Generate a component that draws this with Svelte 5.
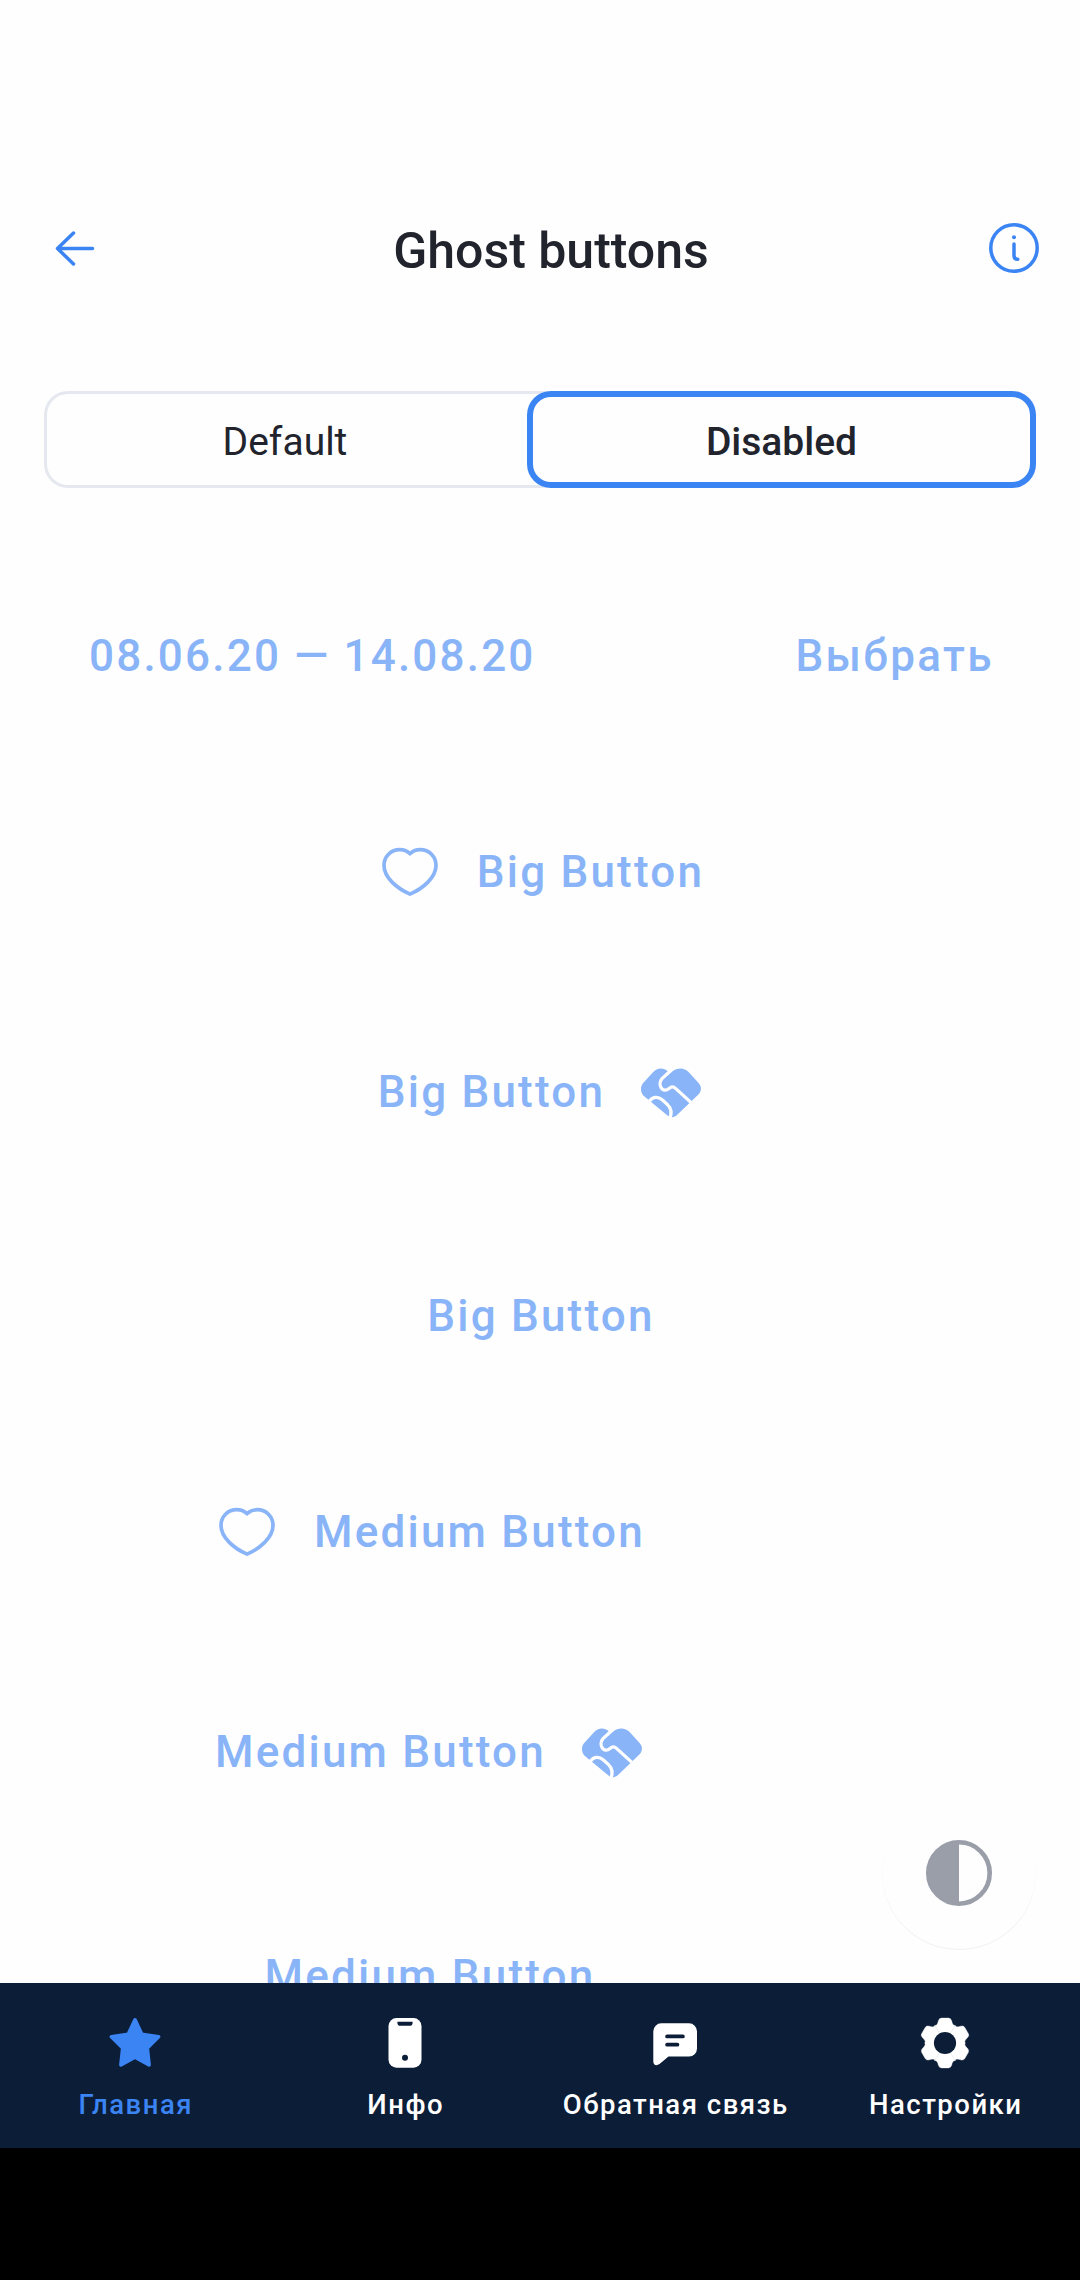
<script>
  const buttons = [
    { label: 'Big Button', icon: 'heart', size: 'big' },
    { label: 'Big Button', icon: 'shake', size: 'big' },
    { label: 'Big Button', icon: null, size: 'big plain' },
    { label: 'Medium Button', icon: 'heart', size: 'medium' },
    { label: 'Medium Button', icon: 'shake', size: 'medium' },
    { label: 'Medium Button', icon: null, size: 'medium plain' }
  ];
  const tabs = [
    { label: 'Главная', icon: 'star', active: true },
    { label: 'Инфо', icon: 'phone' },
    { label: 'Обратная связь', icon: 'chat' },
    { label: 'Настройки', icon: 'gear' }
  ];
  const teeth = [0, 60, 120, 180, 240, 300];
</script>

{#snippet heart()}
  <svg class="icon" viewBox="0 0 66 66">
    <path d="M33 15.6C29.8 12.8 26.6 11.7 22.8 11.7C13.8 11.7 7 18.5 7 27.5C7 39.7 20.5 50.8 33 56.1C45.5 50.8 59 39.7 59 27.5C59 18.5 52.2 11.7 43.2 11.7C39.4 11.7 36.2 12.8 33 15.6Z" fill="none" stroke="currentColor" stroke-width="3.7" />
  </svg>
{/snippet}

{#snippet shake()}
  <svg class="icon" viewBox="0 0 66 66">
    <path d="M5.6 37.8C2.2 34 2.2 28.4 5.2 25L14.8 14.6C19 9.6 25.4 9.4 29.7 13.2L32 15L34.6 13.2C39.5 9.6 46.2 9.4 50.8 14.3L60.6 25C63.8 28.6 63.8 33 60.4 36.5L39.5 56.6C36.8 59.4 33.2 60.4 30.4 58.2Z" fill="currentColor" />
    <path class="gap" d="M33.2 12.2L24 20.6C19 26.5 24.5 36 31 30.6C33.5 28.2 35.2 28.2 37.5 30.4L54 45.4" />
    <path class="gap" d="M10.5 44.6C14.5 38 20 38.2 24.5 42L29.5 46.6C33.6 50.5 34 55 31.8 60.5" />
  </svg>
{/snippet}

<div class="screen">
  <header>
    <svg class="back" viewBox="0 0 66 66">
      <path d="M50.5 33.5H15.5M31.5 18L15.5 33.5L31.5 49" />
    </svg>
    <h1>Ghost buttons</h1>
    <svg class="info" viewBox="0 0 66 66">
      <circle cx="33" cy="33" r="23.2" />
      <path d="M33 29V40.5Q33 44.3 36.8 44.3" />
      <circle class="dot" cx="33" cy="22.2" r="2" />
    </svg>
  </header>

  <div class="segments">
    <div class="segment">Default</div>
    <div class="segment selected">Disabled</div>
  </div>

  <main>
    <div class="dates"><span>08.06.20 — 14.08.20</span><span class="pick">Выбрать</span></div>
    {#each buttons as b}
      <div class="ghost {b.size}">
        {#if b.icon === 'heart'}{@render heart()}{/if}
        <span>{b.label}</span>
        {#if b.icon === 'shake'}{@render shake()}{/if}
      </div>
    {/each}
    <div class="theme">
      <svg viewBox="0 0 66 66">
        <circle cx="33" cy="33" r="30.7" fill="none" stroke="currentColor" stroke-width="4.6" />
        <path d="M33 1A32 32 0 0 0 33 65Z" fill="currentColor" />
      </svg>
    </div>
  </main>

  <nav>
    {#each tabs as t}
      <div class="tab" class:active={t.active}>
        <svg class="icon" viewBox="0 0 66 66" fill="currentColor">
          {#if t.icon === 'star'}
            <path d="M33 9.8L39.8 24.3L56.6 26.7L45.3 38L47.1 54.9L33 47.2L18.9 54.9L20.7 38L9.4 26.7L26.2 24.3Z" stroke="currentColor" stroke-width="3.6" stroke-linejoin="round" />
          {:else if t.icon === 'phone'}
            <rect x="16.5" y="8.1" width="33" height="49.6" rx="8" />
            <path class="cut" d="M25.4 11.8H40.6V12.4Q40.6 15.8 37.6 15.8H28.4Q25.4 15.8 25.4 12.4Z" />
            <circle class="cut" cx="33" cy="47.8" r="3" />
          {:else if t.icon === 'chat'}
            <path d="M19.3 13.3H47A8 8 0 0 1 55 21.3V38.5A8 8 0 0 1 47 46.5H26.5L17.5 54C14.5 56.3 11.3 55 11.3 51.5V21.3A8 8 0 0 1 19.3 13.3Z" />
            <path class="line" d="M25.1 26.4H40.9M25.1 34.7H35.4" />
          {:else}
            {#each teeth as a}
              <path transform="rotate({a} 33 33)" d="M33 33L22.9 15.6Q25 15.6 25.8 13L26.3 11Q27.1 8.1 29.4 8.1H36.6Q38.9 8.1 39.7 11L40.2 13Q41 15.6 43.1 15.6Z" stroke="currentColor" stroke-width=".4" />
            {/each}
            <circle class="cut" cx="33" cy="33" r="11.1" />
          {/if}
        </svg>
        <span>{t.label}</span>
      </div>
    {/each}
  </nav>
  <div class="system"></div>
</div>

<style>
  .screen {
    display: flex;
    flex-direction: column;
    width: 1080px;
    height: 2280px;
    background: #fefefe;
    color: #22242d;
    font-family: Roboto, sans-serif;
    overflow: hidden;
  }
  header {
    display: flex;
    align-items: center;
    height: 118px;
    flex: none;
    padding: 189px 33px 0 42px;
    color: #3b84f3;
  }
  header svg { width: 66px; height: 66px; fill: none; stroke: currentColor; stroke-width: 3.5; stroke-linecap: round; stroke-linejoin: round; }
  header svg .dot { fill: currentColor; stroke: none; }
  h1 {
    flex: 1;
    margin: 0;
    padding: 6px 0 0 13px;
    text-align: center;
    font-size: 50px;
    line-height: 66px;
    font-weight: 500;
    color: #22242d;
  }
  .segments {
    display: flex;
    flex: none;
    box-sizing: border-box;
    height: 97px;
    margin: 84px 44px 0;
    border-radius: 24px;
    box-shadow: inset 0 0 0 3px #e5e8ef;
    font-size: 39px;
    line-height: 103px;
    text-align: center;
  }
  .segment { width: 482px; padding-right: 1px; }
  .segment.selected { width: 509px; padding: 0; border-radius: 24px; background: #fefefe; box-shadow: inset 0 0 0 6px #3b84f3; font-weight: 500; }
  main {
    position: relative;
    flex: 1;
    min-height: 0;
    overflow: hidden;
    color: #8ab4f8;
    font-size: 44px;
    font-weight: 500;
    letter-spacing: 2.2px;
  }
  .dates { display: flex; justify-content: space-between; padding: 111px 86px 0 89px; height: 162px; line-height: 114px; }
  .pick { letter-spacing: 2.4px; }
  .ghost { display: flex; align-items: center; justify-content: center; gap: 33px; height: 220px; margin-left: 44px; box-sizing: border-box; }
  .ghost span { padding: 2px 0 0 1px; }
  .big { width: 993px; }
  .medium { width: 771px; }
  .icon { width: 66px; height: 66px; flex: none; display: block; }
  .gap { fill: none; stroke: #fefefe; stroke-width: 3.3; }
  .ghost.plain { padding-top: 8px; }
  .theme {
    position: absolute;
    right: 44px;
    bottom: 33px;
    width: 154px;
    height: 154px;
    border-radius: 50%;
    display: flex;
    align-items: center;
    justify-content: center;
    color: #9a9ea9;
    background: #fefefe;
    box-shadow: inset 0 -1px 1px rgba(0, 0, 0, .06);
  }
  .theme svg { width: 66px; height: 66px; }
  nav { display: flex; flex: none; height: 165px; background: #0c1d37; color: #fff; }
  .tab { width: 270px; display: flex; flex-direction: column; align-items: center; padding-top: 27px; box-sizing: border-box; }
  .tab span { margin-top: 13px; padding-left: 1.5px; font-size: 27.5px; line-height: 32px; font-weight: 500; letter-spacing: 1.5px; white-space: nowrap; }
  .tab.active { color: #3b84f3; }
  .cut { fill: #0c1d37; }
  .line { fill: none; stroke: #0c1d37; stroke-width: 3.8; stroke-linecap: round; }
  .system { flex: none; height: 132px; background: #000; }
</style>
